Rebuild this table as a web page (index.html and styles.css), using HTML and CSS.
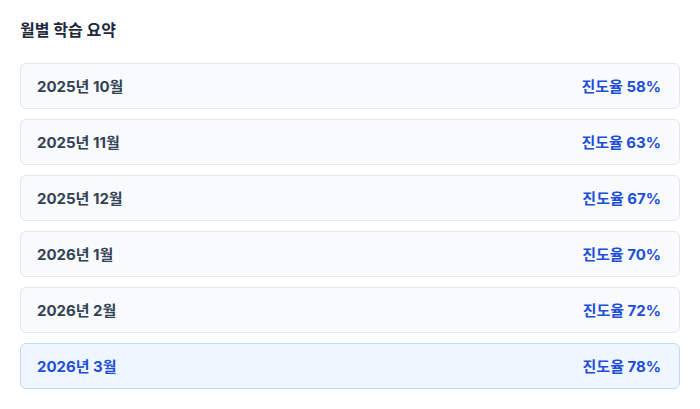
FILE: index.html
```html
<!DOCTYPE html>
<html lang="ko">
<head>
<meta charset="utf-8">
<link rel="stylesheet" href="styles.css">
</head>
<body>
<section class="summary">
  <h2 class="title">월별 학습 요약</h2>
  <ul class="list">
    <li class="row"><span class="month">2025년 10월</span><span class="rate">진도율 58%</span></li>
    <li class="row"><span class="month">2025년 11월</span><span class="rate">진도율 63%</span></li>
    <li class="row"><span class="month">2025년 12월</span><span class="rate">진도율 67%</span></li>
    <li class="row"><span class="month">2026년 1월</span><span class="rate">진도율 70%</span></li>
    <li class="row"><span class="month">2026년 2월</span><span class="rate">진도율 72%</span></li>
    <li class="row active"><span class="month">2026년 3월</span><span class="rate">진도율 78%</span></li>
  </ul>
</section>
</body>
</html>
```
FILE: styles.css
```css
* { box-sizing: border-box; }
html, body { margin: 0; background: #ffffff; }
body {
  font-family: Inter, "Noto Sans CJK KR", sans-serif;
  color: #334155;
}
.summary { padding: 20px; }
.title {
  margin: 0 0 23px;
  font-size: 16px;
  line-height: 20px;
  font-weight: 700;
  color: #1e293b;
}
.list {
  list-style: none;
  margin: 0;
  padding: 0;
  display: flex;
  flex-direction: column;
  gap: 10px;
}
.row {
  height: 46px;
  display: flex;
  align-items: center;
  justify-content: space-between;
  padding: 0 18px 1px 16px;
  background: #f8fafc;
  border: 1px solid #e2e8f0;
  border-radius: 6px;
  font-size: 15px;
  font-weight: 700;
}
.month { color: #334155; }
.rate { color: #1d4ed8; }
.row.active {
  background: #eff6ff;
  border-color: #bfdbfe;
}
.row.active .month { color: #1d4ed8; }
```
